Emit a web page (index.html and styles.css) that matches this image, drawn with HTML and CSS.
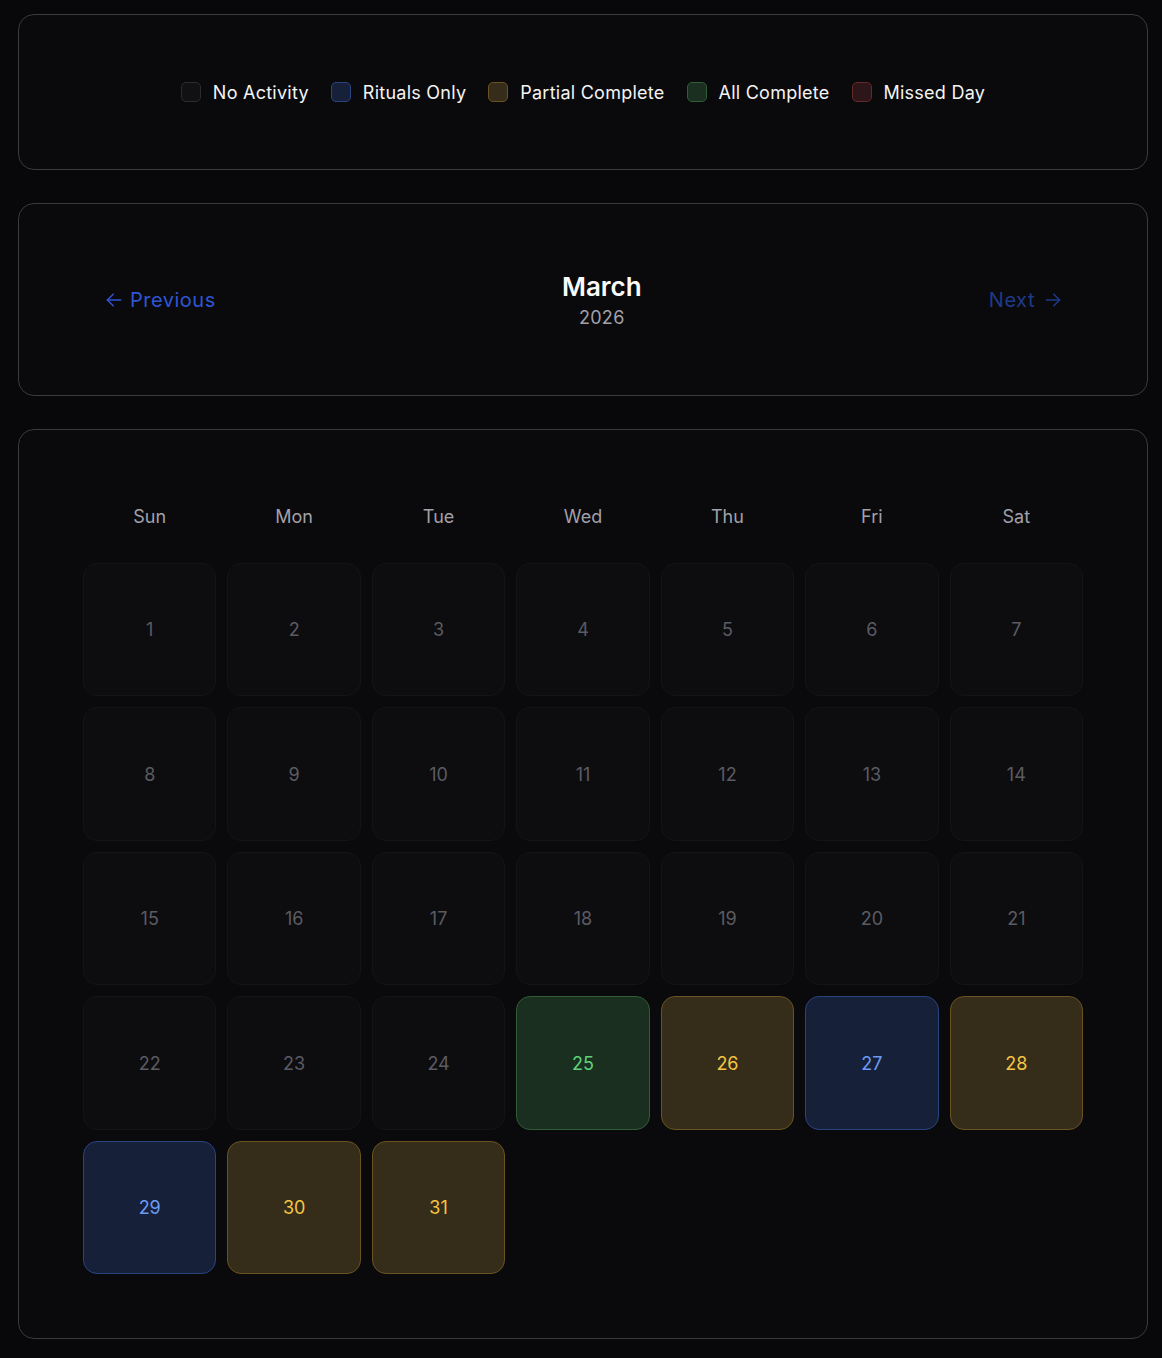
FILE: index.html
```html
<!DOCTYPE html>
<html lang="en">
<head>
<meta charset="UTF-8">
<meta name="viewport" content="width=device-width, initial-scale=1.0">
<title>Ritual Calendar</title>
<link rel="stylesheet" href="styles.css">
</head>
<body>
<div class="page">
  <!-- Legend -->
  <div class="card legend">
    <div class="legend-item"><span class="swatch none"></span>No Activity</div>
    <div class="legend-item"><span class="swatch rituals"></span>Rituals Only</div>
    <div class="legend-item"><span class="swatch partial"></span>Partial Complete</div>
    <div class="legend-item"><span class="swatch complete"></span>All Complete</div>
    <div class="legend-item"><span class="swatch missed"></span>Missed Day</div>
  </div>

  <!-- Month navigation -->
  <div class="card month-nav">
    <button class="nav-button">
      <svg width="20" height="20" viewBox="0 0 24 24" fill="none" stroke="currentColor" stroke-width="1.8" stroke-linecap="round" stroke-linejoin="round"><path d="M20 12H4"/><path d="M11 19l-7-7 7-7"/></svg>
      Previous
    </button>
    <div class="month-title">
      <div class="month-name">March</div>
      <div class="month-year">2026</div>
    </div>
    <button class="nav-button disabled">
      Next
      <svg width="20" height="20" viewBox="0 0 24 24" fill="none" stroke="currentColor" stroke-width="1.8" stroke-linecap="round" stroke-linejoin="round"><path d="M4 12h16"/><path d="M13 5l7 7-7 7"/></svg>
    </button>
  </div>

  <!-- Calendar grid -->
  <div class="card calendar">
    <div class="weekdays">
      <div>Sun</div><div>Mon</div><div>Tue</div><div>Wed</div><div>Thu</div><div>Fri</div><div>Sat</div>
    </div>
    <div class="days" id="days"></div>
  </div>
</div>
<script>
  // Day status for March 2026
  const status = { 25: 'complete', 26: 'partial', 27: 'rituals', 28: 'partial', 29: 'rituals', 30: 'partial', 31: 'partial' };
  const daysEl = document.getElementById('days');
  const firstDay = new Date(2026, 2, 1).getDay();
  for (let i = 0; i < firstDay; i++) {
    daysEl.appendChild(document.createElement('div'));
  }
  for (let d = 1; d <= 31; d++) {
    const cell = document.createElement('div');
    cell.classList.add('day', status[d] || 'none');
    cell.textContent = d;
    daysEl.appendChild(cell);
  }
</script>
</body>
</html>
```

FILE: styles.css
```css
body {
  margin: 0;
  background-color: #08080a;
  font-family: Inter, "Noto Sans", sans-serif;
  color: #f4f4f5;
}
.page {
  padding: 14px 14px 18px 18px;
  display: flex;
  flex-direction: column;
  gap: 33px;
}
.card {
  background-color: #0a0a0c;
  border: 1px solid #3a3a3f;
  border-radius: 16px;
  padding: 64px;
}

/* Legend */
.legend {
  display: flex;
  justify-content: center;
  align-items: center;
  gap: 22px;
  height: 26px;
  font-size: 18px;
  letter-spacing: 0.25px;
}
.legend-item {
  display: flex;
  align-items: center;
  gap: 12px;
}
.swatch {
  width: 18px;
  height: 18px;
  border-radius: 5px;
  border-width: 1px;
  border-style: solid;
}

/* Status colors */
.none { background-color: #0d0d10; border-color: #141417; }
.rituals { background-color: #172039; border-color: #2a4480; }
.partial { background-color: #352c19; border-color: #6a5320; }
.complete { background-color: #1a2f1f; border-color: #2f5d36; }
.missed { background-color: #2c1619; border-color: #65292a; }
.swatch.none { background-color: #111114; border-color: #2c2c30; }

/* Month navigation */
.month-nav {
  display: flex;
  align-items: center;
  justify-content: space-between;
}
.nav-button {
  display: flex;
  align-items: center;
  gap: 6px;
  padding: 8px 20px 8px 21px;
  background: none;
  border: none;
  font-family: inherit;
  font-size: 20px;
  letter-spacing: 0.5px;
  color: #2f55d4;
  cursor: pointer;
}
.nav-button.disabled {
  color: #1e3a8a;
  gap: 8px;
  cursor: default;
}
.month-title {
  text-align: center;
  padding-top: 1px;
}
.month-name {
  font-size: 26px;
  font-weight: 600;
  line-height: 36px;
  color: #fafafa;
}
.month-year {
  font-size: 18px;
  line-height: 26px;
  letter-spacing: 0.3px;
  color: #a1a1aa;
}

/* Calendar */
.weekdays {
  display: grid;
  grid-template-columns: repeat(7, 1fr);
  gap: 11px;
  margin-bottom: 23px;
}
.weekdays div {
  text-align: center;
  line-height: 46px;
  font-size: 18px;
  color: #a1a1aa;
}
.days {
  display: grid;
  grid-template-columns: repeat(7, 1fr);
  gap: 11px;
}
.day {
  aspect-ratio: 1;
  box-sizing: border-box;
  display: flex;
  align-items: center;
  justify-content: center;
  border-width: 1px;
  border-style: solid;
  border-radius: 14px;
  font-size: 18px;
  color: #5b5b62;
}
.day.rituals { color: #6b9cf5; }
.day.partial { color: #f4c542; }
.day.complete { color: #5fd27a; }
```
